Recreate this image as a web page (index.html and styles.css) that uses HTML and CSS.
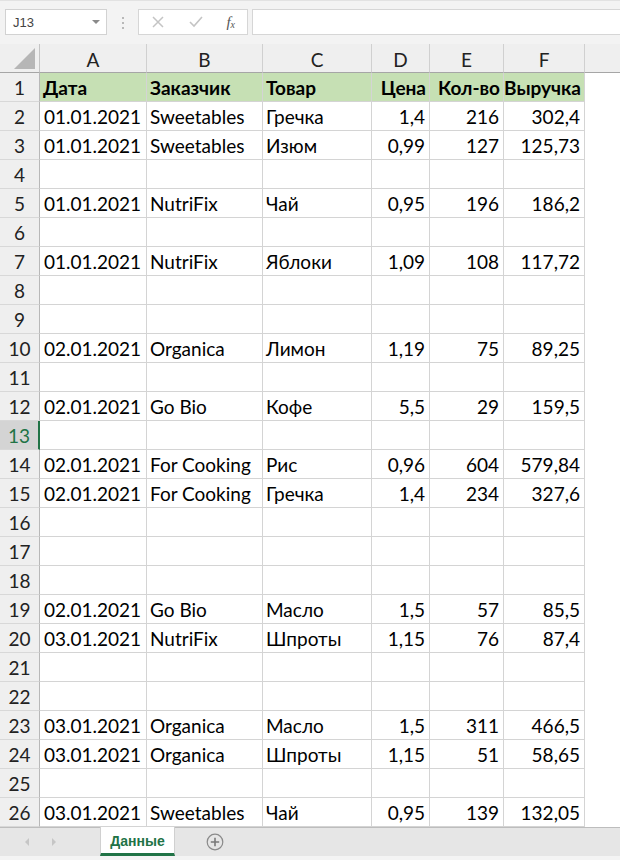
FILE: index.html
```html
<!DOCTYPE html>
<html lang="ru">
<head>
<meta charset="utf-8">
<title>Данные</title>
<link rel="stylesheet" href="styles.css">
</head>
<body>
<div class="app">
  <div class="toolbar">
    <div class="namebox"><span class="nb-text">J13</span><span class="nb-arrow"></span></div>
    <div class="dots"><i></i><i></i><i></i></div>
    <div class="fxbox">
      <svg class="ic" width="14" height="14" viewBox="0 0 14 14"><path d="M2 2 L12 12 M12 2 L2 12" stroke="#c4c4c4" stroke-width="1.5" fill="none"/></svg>
      <svg class="ic" width="16" height="14" viewBox="0 0 16 14"><path d="M2 7 L6 11 L14 2" stroke="#c4c4c4" stroke-width="1.6" fill="none"/></svg>
      <span class="fx">f<sub>x</sub></span>
    </div>
    <div class="formula"></div>
  </div>

  <div class="sheet">
    <div class="row hdr">
      <div class="corner"><span class="tri"></span></div>
      <div class="ch">A</div><div class="ch">B</div><div class="ch">C</div><div class="ch">D</div><div class="ch">E</div><div class="ch">F</div><div class="ch last"></div>
    </div>
    <div class="row head"><div class="rh">1</div><div class="c">Дата</div><div class="c">Заказчик</div><div class="c">Товар</div><div class="c r">Цена</div><div class="c r">Кол-во</div><div class="c r">Выручка</div><div class="g"></div></div>
    <div class="row"><div class="rh">2</div><div class="c">01.01.2021</div><div class="c">Sweetables</div><div class="c">Гречка</div><div class="c r">1,4</div><div class="c r">216</div><div class="c r">302,4</div><div class="g"></div></div>
    <div class="row"><div class="rh">3</div><div class="c">01.01.2021</div><div class="c">Sweetables</div><div class="c">Изюм</div><div class="c r">0,99</div><div class="c r">127</div><div class="c r">125,73</div><div class="g"></div></div>
    <div class="row"><div class="rh">4</div><div class="c"></div><div class="c"></div><div class="c"></div><div class="c"></div><div class="c"></div><div class="c"></div><div class="g"></div></div>
    <div class="row"><div class="rh">5</div><div class="c">01.01.2021</div><div class="c">NutriFix</div><div class="c">Чай</div><div class="c r">0,95</div><div class="c r">196</div><div class="c r">186,2</div><div class="g"></div></div>
    <div class="row"><div class="rh">6</div><div class="c"></div><div class="c"></div><div class="c"></div><div class="c"></div><div class="c"></div><div class="c"></div><div class="g"></div></div>
    <div class="row"><div class="rh">7</div><div class="c">01.01.2021</div><div class="c">NutriFix</div><div class="c">Яблоки</div><div class="c r">1,09</div><div class="c r">108</div><div class="c r">117,72</div><div class="g"></div></div>
    <div class="row"><div class="rh">8</div><div class="c"></div><div class="c"></div><div class="c"></div><div class="c"></div><div class="c"></div><div class="c"></div><div class="g"></div></div>
    <div class="row"><div class="rh">9</div><div class="c"></div><div class="c"></div><div class="c"></div><div class="c"></div><div class="c"></div><div class="c"></div><div class="g"></div></div>
    <div class="row"><div class="rh">10</div><div class="c">02.01.2021</div><div class="c">Organica</div><div class="c">Лимон</div><div class="c r">1,19</div><div class="c r">75</div><div class="c r">89,25</div><div class="g"></div></div>
    <div class="row"><div class="rh">11</div><div class="c"></div><div class="c"></div><div class="c"></div><div class="c"></div><div class="c"></div><div class="c"></div><div class="g"></div></div>
    <div class="row"><div class="rh">12</div><div class="c">02.01.2021</div><div class="c">Go Bio</div><div class="c">Кофе</div><div class="c r">5,5</div><div class="c r">29</div><div class="c r">159,5</div><div class="g"></div></div>
    <div class="row"><div class="rh sel">13</div><div class="c"></div><div class="c"></div><div class="c"></div><div class="c"></div><div class="c"></div><div class="c"></div><div class="g"></div></div>
    <div class="row"><div class="rh">14</div><div class="c">02.01.2021</div><div class="c">For Cooking</div><div class="c">Рис</div><div class="c r">0,96</div><div class="c r">604</div><div class="c r">579,84</div><div class="g"></div></div>
    <div class="row"><div class="rh">15</div><div class="c">02.01.2021</div><div class="c">For Cooking</div><div class="c">Гречка</div><div class="c r">1,4</div><div class="c r">234</div><div class="c r">327,6</div><div class="g"></div></div>
    <div class="row"><div class="rh">16</div><div class="c"></div><div class="c"></div><div class="c"></div><div class="c"></div><div class="c"></div><div class="c"></div><div class="g"></div></div>
    <div class="row"><div class="rh">17</div><div class="c"></div><div class="c"></div><div class="c"></div><div class="c"></div><div class="c"></div><div class="c"></div><div class="g"></div></div>
    <div class="row"><div class="rh">18</div><div class="c"></div><div class="c"></div><div class="c"></div><div class="c"></div><div class="c"></div><div class="c"></div><div class="g"></div></div>
    <div class="row"><div class="rh">19</div><div class="c">02.01.2021</div><div class="c">Go Bio</div><div class="c">Масло</div><div class="c r">1,5</div><div class="c r">57</div><div class="c r">85,5</div><div class="g"></div></div>
    <div class="row"><div class="rh">20</div><div class="c">03.01.2021</div><div class="c">NutriFix</div><div class="c">Шпроты</div><div class="c r">1,15</div><div class="c r">76</div><div class="c r">87,4</div><div class="g"></div></div>
    <div class="row"><div class="rh">21</div><div class="c"></div><div class="c"></div><div class="c"></div><div class="c"></div><div class="c"></div><div class="c"></div><div class="g"></div></div>
    <div class="row"><div class="rh">22</div><div class="c"></div><div class="c"></div><div class="c"></div><div class="c"></div><div class="c"></div><div class="c"></div><div class="g"></div></div>
    <div class="row"><div class="rh">23</div><div class="c">03.01.2021</div><div class="c">Organica</div><div class="c">Масло</div><div class="c r">1,5</div><div class="c r">311</div><div class="c r">466,5</div><div class="g"></div></div>
    <div class="row"><div class="rh">24</div><div class="c">03.01.2021</div><div class="c">Organica</div><div class="c">Шпроты</div><div class="c r">1,15</div><div class="c r">51</div><div class="c r">58,65</div><div class="g"></div></div>
    <div class="row"><div class="rh">25</div><div class="c"></div><div class="c"></div><div class="c"></div><div class="c"></div><div class="c"></div><div class="c"></div><div class="g"></div></div>
    <div class="row"><div class="rh">26</div><div class="c">03.01.2021</div><div class="c">Sweetables</div><div class="c">Чай</div><div class="c r">0,95</div><div class="c r">139</div><div class="c r">132,05</div><div class="g"></div></div>
  </div>

  <div class="tabs">
    <div class="nav"><span class="arr left"></span><span class="arr right"></span></div>
    <div class="tab">Данные</div>
    <div class="add">
      <svg width="18" height="18" viewBox="0 0 18 18"><circle cx="9" cy="9" r="7.8" fill="none" stroke="#8a8a8a" stroke-width="1.2"/><path d="M9 4.8 V13.2 M4.8 9 H13.2" stroke="#7a7a7a" stroke-width="1.6"/></svg>
    </div>
  </div>
</div>
</body>
</html>
```

FILE: styles.css
```css
* { box-sizing: border-box; }
html, body { margin: 0; padding: 0; background: #ffffff; }
body { width: 620px; height: 860px; overflow: hidden; font-family: "Lato", "Liberation Sans", sans-serif; }
.app { width: 620px; height: 860px; display: flex; flex-direction: column; }

.toolbar { height: 44px; background: #f3f3f3; display: flex; align-items: flex-start; padding-top: 9px; padding-left: 5px; border-top: 1px solid #e2e2e2; }
.namebox { width: 102px; height: 26px; margin-top: -1px; background: #fff; border: 1px solid #d2d2d2; display: flex; align-items: center; justify-content: space-between; padding: 0 6px 0 7px; }
.nb-text { font-family: "Liberation Sans", sans-serif; font-size: 13px; color: #444; }
.nb-arrow { width: 0; height: 0; border-left: 4px solid transparent; border-right: 4px solid transparent; border-top: 4px solid #8a8a8a; }
.dots { width: 31px; height: 26px; display: flex; flex-direction: column; align-items: center; justify-content: center; gap: 3px; }
.dots i { display: block; width: 2px; height: 2px; background: #b8b8b8; }
.fxbox { width: 110px; height: 26px; margin-top: -1px; background: #fff; border: 1px solid #d6d6d6; display: flex; align-items: center; justify-content: space-between; padding: 0 12px 0 12px; }
.fxbox .ic { display: block; }
.fx { font-family: "Liberation Serif", serif; font-style: italic; font-size: 15px; color: #555; line-height: 1; }
.fx sub { font-size: 10px; vertical-align: baseline; position: relative; top: 1px; }
.formula { flex: 1; height: 26px; margin-top: -1px; margin-left: 4px; background: #fff; border: 1px solid #d6d6d6; border-right: none; }

.sheet { flex: 1; display: flex; flex-direction: column; }
.row { display: grid; grid-template-columns: 40px 107px 116px 109px 58px 74px 81px 1fr; height: 29px; }
.hdr { background: #efefef; }
.corner { border-right: 1px solid #c4c4c4; border-bottom: 1px solid #a6a6a6; display: flex; align-items: flex-end; justify-content: flex-end; padding: 0 4px 3px 0; }
.tri { width: 0; height: 0; border-left: 21px solid transparent; border-bottom: 21px solid #b6b6b6; }
.ch { border-right: 1px solid #d0d0d0; border-bottom: 1px solid #a6a6a6; font-family: "Lato", "Liberation Sans", sans-serif; font-size: 19px; color: #222; display: flex; align-items: center; justify-content: center; padding-top: 2px; }
.ch.last { border-right: none; }

.rh { background: #efefef; border-right: 1px solid #b8b8b8; border-bottom: 1px solid #d8d8d8; font-size: 19px; color: #222; display: flex; align-items: flex-end; justify-content: center; padding-bottom: 1px; line-height: 24px; }
.rh.sel { background: #d4d4d4; color: #217346; border-right: 2px solid #217346; }
.c { border-right: 1px solid #d4d4d4; border-bottom: 1px solid #d4d4d4; font-size: 19px; color: #000; white-space: nowrap; overflow: visible; display: flex; align-items: flex-end; padding: 0 4px 1px 3px; line-height: 24px; }
.row > .c:nth-child(2) { padding-left: 4px; }
.c.r { justify-content: flex-end; padding-right: 4px; padding-left: 2px; }
.head .c { background: #c6e0b4; font-weight: 700; padding-left: 3px; }
.head .c.r { padding-right: 3px; padding-left: 0; }
.row.head > .c:nth-child(2) { padding-left: 3px; }
.g { background: #fff; }

.tabs { height: 33px; background: #e6e6e6; border-top: 1px solid #bdbdbd; border-bottom: 4px solid #f4f4f4; display: flex; align-items: stretch; }
.nav { width: 100px; display: flex; align-items: center; padding-left: 25px; gap: 23px; }
.arr { width: 0; height: 0; border-top: 4px solid transparent; border-bottom: 4px solid transparent; }
.arr.left { border-right: 4px solid #c6c6c6; }
.arr.right { border-left: 4px solid #c6c6c6; }
.tab { width: 75px; background: #fff; margin-top: -1px; border-bottom: 3px solid #217346; border-left: 1px solid #d0d0d0; border-right: 1px solid #d0d0d0; color: #217346; font-weight: 700; font-size: 14px; font-family: "Liberation Sans", sans-serif; display: flex; align-items: center; justify-content: center; padding-top: 2px; }
.add { width: 80px; display: flex; align-items: center; justify-content: center; }
```
